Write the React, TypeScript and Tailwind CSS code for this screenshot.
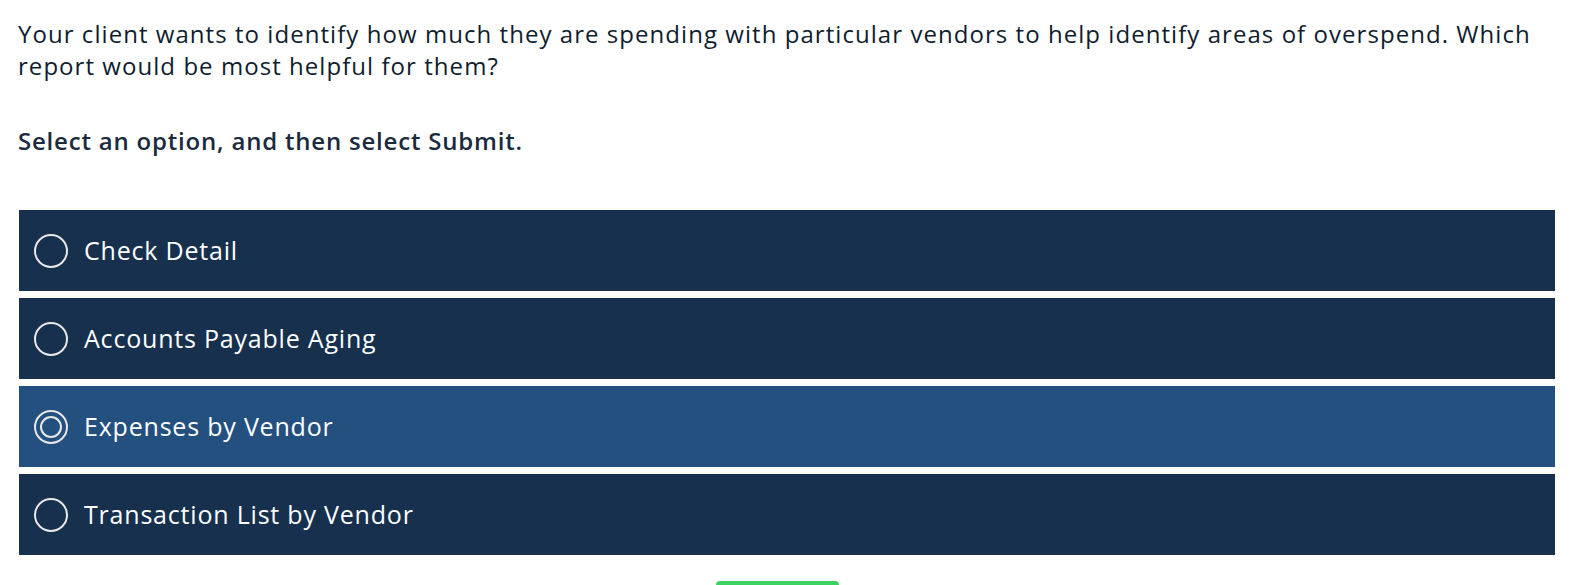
const options = [
  "Check Detail",
  "Accounts Payable Aging",
  "Expenses by Vendor",
  "Transaction List by Vendor",
];

function Radio({ checked }: { checked: boolean }) {
  return (
    <svg width="36" height="36" viewBox="0 0 36 36" className="shrink-0">
      <circle cx="18" cy="18" r="16" fill="none" stroke="#e8e8e8" strokeWidth="2" />
      {checked && <circle cx="18" cy="18" r="10" fill="none" stroke="#e8e8e8" strokeWidth="2" />}
    </svg>
  );
}

export default function App() {
  const selected = 2;
  return (
    <div
      className="w-[1585px] h-[585px] overflow-hidden bg-white pl-[18px] pr-[30px] pt-[18px]"
      style={{ fontFamily: "'Open Sans', 'Noto Sans', sans-serif" }}
    >
      <p className="text-[24px] leading-[32px] tracking-[1.05px] text-[#0f1d2e] w-[1545px]">
        Your client wants to identify how much they are spending with particular vendors to help identify areas of overspend. Which
        <br />
        report would be most helpful for them?
      </p>
      <p className="mt-[43px] text-[24px] leading-[32px] tracking-[0.8px] font-semibold text-[#1b2a3d]">
        Select an option, and then select Submit.
      </p>

      <div className="mt-[53px] ml-[1px] w-[1536px] flex flex-col gap-[7px]">
        {options.map((label, i) => (
          <div
            key={label}
            className={`h-[81px] flex items-center gap-[15px] pl-[14px] text-white text-[25px] tracking-[0.8px] ${
              i === selected ? "bg-[#24507f]" : "bg-[#16304e]"
            }`}
          >
            <Radio checked={i === selected} />
            <span>{label}</span>
          </div>
        ))}
      </div>

      <div className="mt-[26px] flex justify-center pr-[18px]">
        <div className="w-[123px] h-[40px] rounded-[4px] bg-[#3dd15f]" />
      </div>
    </div>
  );
}
